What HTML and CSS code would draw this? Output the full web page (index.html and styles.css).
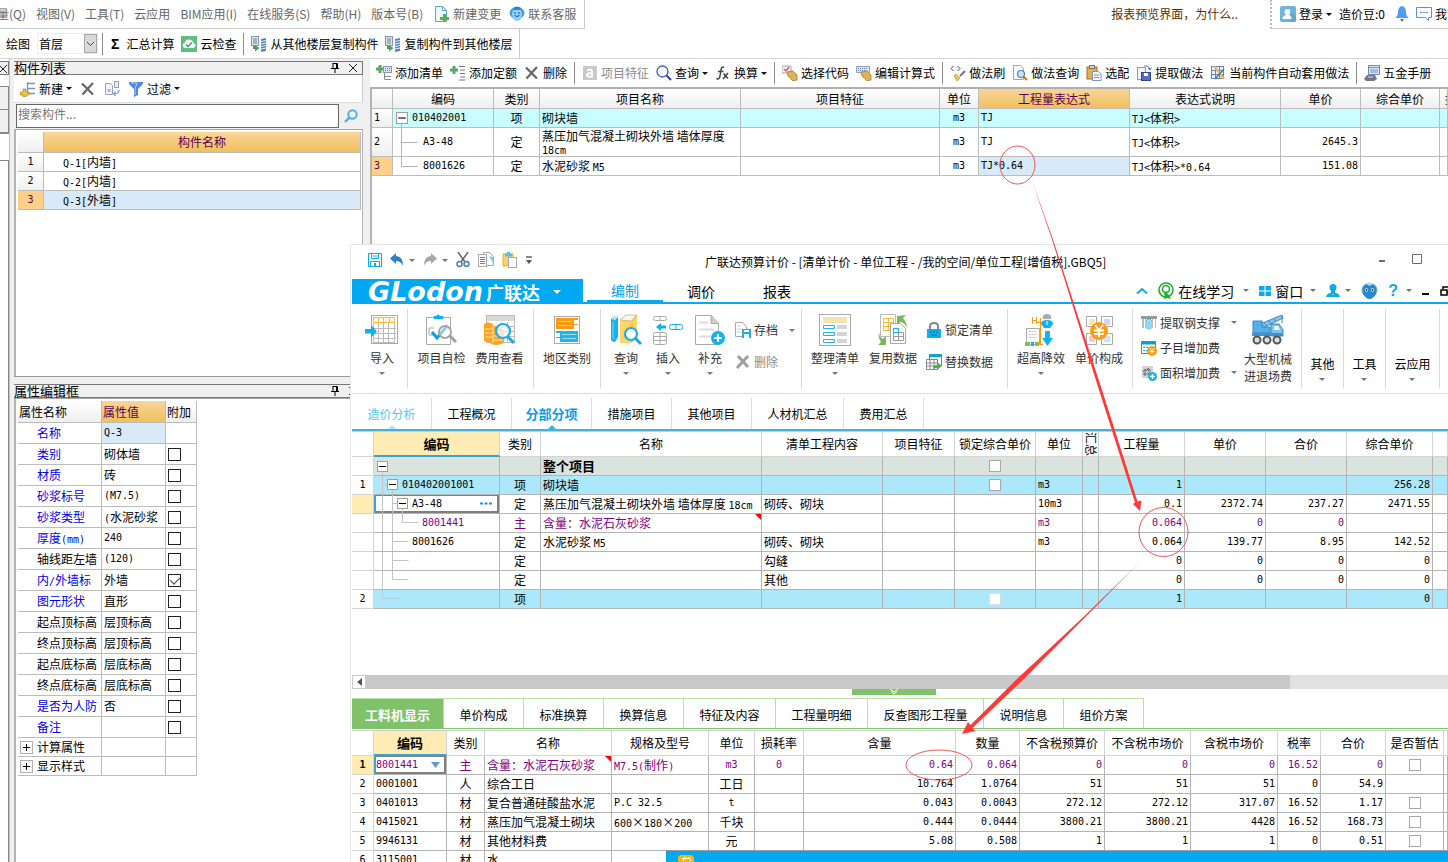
FILE: index.html
```html
<!DOCTYPE html>
<html lang="zh-CN">
<head>
<meta charset="utf-8">
<title>广联达预算计价</title>
<link rel="stylesheet" href="styles.css">
</head>
<body>
<svg class="defs" aria-hidden="true">
  <symbol id="i-cross" viewBox="0 0 16 16"><path d="M2 2.500l11 11M13 2L2.500 13.500" fill="none" stroke="#666" stroke-width="2.200"/></symbol>
  <symbol id="i-pin" viewBox="0 0 10 10"><path d="M2.500 .5h5M3 .5v5M6.500 .5v5M7.500 .5v5M1 5.500h8M5 6v4" fill="none" stroke="#000"/></symbol>
  <symbol id="i-close" viewBox="0 0 10 10"><path d="M1 1l8 8M9 1L1 9" fill="none" stroke="#222"/></symbol>
  <symbol id="i-copyfloor" viewBox="0 0 16 16"><rect x=".5" y=".5" width="7" height="9" fill="#dfe3ea" stroke="#8a94a6"/><path d="M2 3h4M2 5h4M2 7h4" stroke="#6b7fa8"/><path d="M10 3l5-1v13l-5 1z" fill="#5d84b8"/><path d="M10 5.500l5-1M10 8l5-1M10 10.500l5-1M10 13l5-1" stroke="#e4edf8"/><path d="M2 10v3h2v2.500l4.500-3.500L4 9v1z" fill="#3fa35c"/></symbol>
  <symbol id="i-minus" viewBox="0 0 11 11"><rect x=".5" y=".5" width="10" height="10" fill="#fff" stroke="#a0a0a0"/><path d="M2 5.500h7" stroke="#000"/></symbol>
  <symbol id="i-plus" viewBox="0 0 13 13"><rect x=".5" y=".5" width="12" height="12" fill="#fff" stroke="#b0b0b0"/><path d="M3 6.500h7M6.500 3v7" stroke="#000"/></symbol>
</svg>

<div class="app">
  <header class="top">
    <nav class="menu">
      <button>量(Q)</button><button>视图(V)</button><button>工具(T)</button><button>云应用</button><button>BIM应用(I)</button><button>在线服务(S)</button><button>帮助(H)</button><button>版本号(B)</button>
      <button><svg width="16" height="16" viewBox="0 0 16 16"><path d="M2.500 .5h7l4 4v11h-11z" fill="#eef7fd" stroke="#63a5c8"/><path d="M9.500 .5v4h4" fill="none" stroke="#63a5c8"/><path d="M10 8h3v3h3v3h-3v2h-3v-2H7v-3h3z" fill="#5cb335"/></svg>新建变更</button>
      <button><svg width="16" height="16" viewBox="0 0 16 16"><ellipse cx="8" cy="7" rx="7.500" ry="6" fill="#3f9be4"/><path d="M3 8q0-5 5-5t5 5l-1 5q-4 4-8 0z" fill="#8fd0fa"/><path d="M4 2q4-3 8 0l-1 2H5z" fill="#2d86d2"/><path d="M5 7h2M9 7h2M5.500 9.500q2.500 2 5 0" fill="none" stroke="#185a9a"/></svg>联系客服</button>
    </nav>
    <a class="news" href="#">报表预览界面，为什么..</a>
    <div class="account">
      <button><svg width="16" height="16" viewBox="0 0 16 16"><rect width="16" height="16" rx="2" fill="#6eb4dc"/><circle cx="7.500" cy="6" r="3" fill="#fff"/><path d="M2.500 13q0-4 5-4t5 4z" fill="#fff"/><path d="M10 5l6 6v5h-5z" fill="#5598bf" opacity=".5"/></svg>登录<i class="caret dark"></i></button>
      <span>造价豆:0</span>
      <svg width="14" height="16" viewBox="0 0 14 16"><path d="M7 0q4 1 4 6 0 4 3 6H0q3-2 3-6 0-5 4-6z" fill="#519cf5"/><path d="M5 13h4l-2 3z" fill="#4a6ea0"/></svg>
      <button><svg width="16" height="16" viewBox="0 0 16 16"><path d="M.5 1.500h15v10h-3v3l-3-3h-9z" fill="#fff" stroke="#4a93e8"/><path d="M4 6.500h2M7 6.500h2M10 6.500h2" stroke="#4a93e8"/></svg>我</button>
    </div>
  </header>

  <div class="floorbar">
    <div class="floorbar-in">
      <button>绘图</button>
      <span class="combo"><select aria-label="楼层"><option>首层</option></select><svg width="13" height="19" viewBox="0 0 13 19"><rect x=".5" y=".5" width="12" height="18" fill="#d9d9d9" stroke="#a8a8a8"/><path d="M3 8l3.500 3.500L10 8" fill="none" stroke="#444"/></svg></span>
      <i class="sep"></i>
      <button class="sum"><b>Σ</b>汇总计算</button>
      <button><svg width="16" height="16" viewBox="0 0 16 16"><rect width="16" height="16" fill="#62bd80"/><path d="M4 12q-3-1-2-3.500 0-2 2-2 1-3.500 4.500-3t4 3.500q2 .5 2 2.500T12 12z" fill="#f2fbf5"/><path d="M5 8.500l2 2 4-4" fill="none" stroke="#4a9c66" stroke-width="1.300"/></svg>云检查</button>
      <i class="sep"></i>
      <button><svg width="16" height="16"><use href="#i-copyfloor"/></svg>从其他楼层复制构件</button>
      <button><svg width="16" height="16"><use href="#i-copyfloor"/></svg>复制构件到其他楼层</button>
    </div>
  </div>

  <div class="work">
    <aside class="strip"><div class="strip-title"><svg width="8" height="10" viewBox="2 0 8 10"><use href="#i-close" width="10" height="10"/></svg></div><div class="strip-box"></div><div class="strip-box on"></div><div class="strip-rest"></div></aside>

    <aside class="side">
      <section class="pane list">
        <h2 class="pane-title">构件列表<span><svg width="10" height="10"><use href="#i-pin"/></svg><svg width="10" height="10"><use href="#i-close"/></svg></span></h2>
        <div class="pane-tools">
          <button><svg width="16" height="16" viewBox="0 0 16 16"><path d="M7.500 1v11M8 2.500h7M8 7.500h7M8 12.500h7" stroke="#7c93ba" fill="none" stroke-width="1.300"/><path d="M3 8h3v3h3v3H6v2H3v-2H0v-3h3z" fill="#e8c34e" stroke="#9a7a1c" stroke-width=".6"/></svg>新建<i class="caret dark"></i></button>
          <button aria-label="删除"><svg width="16" height="16"><use href="#i-cross"/></svg></button>
          <button aria-label="复制"><svg width="16" height="16" viewBox="0 0 16 16"><path d="M1.500 2.500h5l2 2v9h-7z" fill="#f3f5fa" stroke="#9aa3b8"/><path d="M3.500 8h3v3h-3z" fill="#aeb8d0"/><rect x="10.500" y=".5" width="4" height="6" fill="#e6ebf5" stroke="#9aa3b8"/><path d="M15 9q0 4-5 4m1.500-2.500L9.500 13l2 2" fill="none" stroke="#4a78d0"/></svg></button>
          <button><svg width="16" height="16" viewBox="0 0 16 16"><path d="M1 1h14v2L10 8v6l-4 2V8L1 3z" fill="#4f8ae0"/><path d="M3 2h6L7 8v6" fill="none" stroke="#b5d1fa"/></svg>过滤<i class="caret dark"></i></button>
        </div>
        <form class="search"><input type="text" aria-label="搜索构件" placeholder="搜索构件..."><button type="button" aria-label="搜索"><svg width="14" height="14" viewBox="0 0 14 14"><circle cx="8.500" cy="5.500" r="4.200" fill="#e4f4fe" stroke="#5aa9e0" stroke-width="2"/><path d="M5.500 8.500L1 13" stroke="#5aa9e0" stroke-width="2.400"/></svg></button></form>
        <div class="pane-body">
          <table class="grid parts">
            <colgroup><col class="w26"><col></colgroup>
            <tr class="head"><th></th><th class="gold">构件名称</th></tr>
            <tr><th class="n">1</th><td><span class="n">Q-1[</span>内墙<span class="n">]</span></td></tr>
            <tr><th class="n">2</th><td><span class="n">Q-2[</span>内墙<span class="n">]</span></td></tr>
            <tr><th class="n cur">3</th><td class="sel"><span class="n">Q-3[</span>外墙<span class="n">]</span></td></tr>
          </table>
        </div>
      </section>
      <section class="pane props">
        <h2 class="pane-title">属性编辑框<span><svg width="10" height="10"><use href="#i-pin"/></svg><svg width="10" height="10"><use href="#i-close"/></svg></span></h2>
        <div class="pane-body">
          <table class="grid prop">
            <colgroup><col class="w84"><col class="w64"><col class="w31"></colgroup>
            <tr class="head"><th>属性名称</th><th class="gold">属性值</th><th>附加</th></tr>
            <tr><td class="key">名称</td><td class="sel n">Q-3</td><td></td></tr>
            <tr><td class="key">类别</td><td>砌体墙</td><td><input type="checkbox" aria-label="类别"></td></tr>
            <tr><td class="key">材质</td><td>砖</td><td><input type="checkbox" aria-label="材质"></td></tr>
            <tr><td class="key">砂浆标号</td><td class="n">(M7.5)</td><td><input type="checkbox" aria-label="砂浆标号"></td></tr>
            <tr><td class="key">砂浆类型</td><td><span class="n">(</span>水泥砂浆</td><td><input type="checkbox" aria-label="砂浆类型"></td></tr>
            <tr><td class="key">厚度<span class="n">(mm)</span></td><td class="n">240</td><td><input type="checkbox" aria-label="厚度"></td></tr>
            <tr><td class="key blk">轴线距左墙</td><td class="n">(120)</td><td><input type="checkbox" aria-label="轴线距左墙"></td></tr>
            <tr><td class="key">内<span class="n">/</span>外墙标</td><td>外墙</td><td><input type="checkbox" checked aria-label="内外墙标"></td></tr>
            <tr><td class="key">图元形状</td><td>直形</td><td><input type="checkbox" aria-label="图元形状"></td></tr>
            <tr><td class="key blk">起点顶标高</td><td>层顶标高</td><td><input type="checkbox" aria-label="起点顶标高"></td></tr>
            <tr><td class="key blk">终点顶标高</td><td>层顶标高</td><td><input type="checkbox" aria-label="终点顶标高"></td></tr>
            <tr><td class="key blk">起点底标高</td><td>层底标高</td><td><input type="checkbox" aria-label="起点底标高"></td></tr>
            <tr><td class="key blk">终点底标高</td><td>层底标高</td><td><input type="checkbox" aria-label="终点底标高"></td></tr>
            <tr><td class="key">是否为人防</td><td>否</td><td><input type="checkbox" aria-label="是否为人防"></td></tr>
            <tr><td class="key">备注</td><td></td><td><input type="checkbox" aria-label="备注"></td></tr>
            <tr class="grp"><td><svg width="13" height="13"><use href="#i-plus"/></svg>计算属性</td><td></td><td></td></tr>
            <tr class="grp"><td><svg width="13" height="13"><use href="#i-plus"/></svg>显示样式</td><td></td><td></td></tr>
          </table>
        </div>
      </section>
    </aside>

    <main class="main">
      <div class="tools">
        <button><svg width="16" height="16" viewBox="0 0 16 16"><path d="M2.500 0h3v2.500H8v3H5.500V8h-3V5.500H0v-3h2.500z" fill="#5ea866"/><rect x="7.500" y="1.500" width="8" height="6" fill="#dbe4f5" stroke="#8795b0"/><path d="M9 3.500h5M9 5.500h5" stroke="#5c79b8" stroke-dasharray="1 1"/><path d="M8.500 8v6.500M9 11.500h6M9 14.500h6" stroke="#888" fill="none"/></svg>添加清单</button>
        <button><svg width="16" height="16" viewBox="0 0 16 16"><path d="M2.500 1h3v2.500H8v3H5.500V9h-3V6.500H0v-3h2.500z" fill="#5ea866"/><path d="M9 1.500h6M10 5h5M10 8.500h5M10 12h5M9 15h6" stroke="#777"/></svg>添加定额</button>
        <button><svg width="16" height="16"><use href="#i-cross"/></svg>删除</button>
        <i class="sep"></i>
        <button class="off"><svg width="16" height="16" viewBox="0 0 16 16"><rect x="1" y="1" width="14" height="14" fill="#c9c9c9"/><path d="M5 5.500q5-2 5 1v5q-5 1-5-1.200T10 8" fill="none" stroke="#fff" stroke-width="1.800"/></svg>项目特征</button>
        <button><svg width="16" height="16" viewBox="0 0 16 16"><circle cx="6.500" cy="6.500" r="5.500" fill="#f4f8ff" stroke="#4858b8" stroke-width="1.300"/><path d="M10.500 10.500l4.500 4.500" stroke="#30409a" stroke-width="2"/></svg>查询<i class="caret dark"></i></button>
        <button><svg width="16" height="16" viewBox="0 0 16 16"><path d="M9 2.500Q6.500 1 6 5L5 11q-.7 4-3.500 2.500M3 6.500h5.500M8.500 8.500l4.500 5M13 8l-5 6" fill="none" stroke="#444" stroke-width="1.500"/></svg>换算<i class="caret dark"></i></button>
        <i class="sep"></i>
        <button><svg width="16" height="16" viewBox="0 0 16 16"><path d="M0 1h9v7H0z" fill="#f0f2f6" stroke="#aab"/><path d="M2 4l2 2 3-4" fill="none" stroke="#e2574c" stroke-width="1.400"/><path d="M5 7l6-1 4 4v5l-4 1-5-5z" fill="#dfb257" stroke="#9b7427" stroke-width=".7"/></svg>选择代码</button>
        <button><svg width="16" height="16" viewBox="0 0 16 16"><path d="M.5 1.500h13v6H.5z" fill="#dce4f2" stroke="#93a0bb"/><path d="M2 3.500h10M2 5.500h10" stroke="#6d83b0" stroke-dasharray="1 1"/><path d="M5 7l6-1 4 4v5l-4 1-5-5z" fill="#dfb257" stroke="#9b7427" stroke-width=".7"/></svg>编辑计算式</button>
        <i class="sep"></i>
        <button><svg width="16" height="16" viewBox="0 0 16 16"><path d="M3.500 1L1 3.500 3.500 6M7.500 1L10 3.500 7.500 6" fill="none" stroke="#444"/><path d="M15 6l-5 5" stroke="#7a6a9a" stroke-width="2"/><path d="M6 9l4 4-3 3-3-5z" fill="#ecc55e" stroke="#a5832c" stroke-width=".6"/></svg>做法刷</button>
        <button><svg width="16" height="16" viewBox="0 0 16 16"><path d="M1.500 .5h7l3 3v11h-10z" fill="#fafbfd" stroke="#9aa5b5"/><circle cx="9" cy="9" r="3.500" fill="#c5e2f7" stroke="#5c7fa8" stroke-width="1.200"/><path d="M11.500 11.500L15 15" stroke="#b87f2a" stroke-width="2.200"/></svg>做法查询</button>
        <button><svg width="16" height="16" viewBox="0 0 16 16"><rect x="1" y="2" width="10" height="12" fill="#e5b04a" stroke="#a07323"/><rect x="3.500" y=".5" width="5" height="3" fill="#c9ced8" stroke="#777"/><path d="M6.500 6.500h6l2.500 2.500v6.500H6.500z" fill="#f4f7fd" stroke="#7d93c0"/><path d="M8 10h5M8 12.500h5" stroke="#6d8fd0"/></svg>选配</button>
        <button><svg width="16" height="16" viewBox="0 0 16 16"><path d="M1.500 2.500h8v12h-8z" fill="#f2f4fa" stroke="#8998b5"/><path d="M8 1q5-1 6 4m-2-2l2 2 1.500-2.500" fill="none" stroke="#4878c8"/><rect x="5.500" y="7.500" width="9" height="8" fill="#5270c0" stroke="#32458c"/><rect x="8" y="8" width="4" height="3" fill="#fff"/></svg>提取做法</button>
        <button><svg width="16" height="16" viewBox="0 0 16 16"><rect x="1.500" y="1.500" width="12" height="12" fill="#eaf0fa" stroke="#6784b5"/><path d="M1 5.500h13M1 9.500h13M5.500 1v13M9.500 1v13" stroke="#6784b5"/><path d="M4 1l10 13" stroke="#e2ba56" stroke-width="2.200"/><path d="M14 4L5 14" stroke="#5273b0" stroke-width="1.500"/></svg>当前构件自动套用做法</button>
        <i class="sep"></i>
        <button><svg width="16" height="16" viewBox="0 0 16 16"><path d="M4.500 .5h11v9h-11z" fill="#dce7f7" stroke="#6c87b5"/><path d="M5 2.500h10M6 5h8M6 7h8" stroke="#6c8fce"/><path d="M0 14l3-4h8l2 4-3 2H2z" fill="#727985"/><path d="M4 12h5" stroke="#dde"/></svg>五金手册</button>
      </div>
      <div class="main-body">
        <table class="grid quota">
          <colgroup><col class="w21"><col class="w101"><col class="w46"><col class="w201"><col class="w199"><col class="w39"><col class="w151"><col class="w151"><col class="w80"><col class="w79"><col></colgroup>
          <tr class="head"><th></th><th>编码</th><th>类别</th><th>项目名称</th><th>项目特征</th><th>单位</th><th class="gold">工程量表达式</th><th>表达式说明</th><th>单价</th><th>综合单价</th><th class="cut">措</th></tr>
          <tr class="cyan"><th class="n l">1</th><td class="n tree"><svg width="19" height="18" viewBox="0 0 19 18"><path d="M8.500 14v4" stroke="#b5b5b5"/><use href="#i-minus" x="3" y="3" width="12" height="12"/></svg>010402001</td><td class="c">项</td><td>砌块墙</td><td></td><td class="c n">m3</td><td class="n">TJ</td><td><span class="n">TJ&lt;</span>体积<span class="n">&gt;</span></td><td></td><td></td><td></td></tr>
          <tr class="tall"><th class="n l">2</th><td class="n tree"><svg width="30" height="28" viewBox="0 0 30 28"><path d="M8.500 0v28M8.500 14.500h16" fill="none" stroke="#b5b5b5"/></svg>A3-48</td><td class="c">定</td><td class="wrap">蒸压加气混凝土砌块外墙 墙体厚度 <span class="n">18cm</span></td><td></td><td class="c n">m3</td><td class="n">TJ</td><td><span class="n">TJ&lt;</span>体积<span class="n">&gt;</span></td><td class="r n">2645.3</td><td></td><td></td></tr>
          <tr><th class="n l cur">3</th><td class="n tree"><svg width="30" height="18" viewBox="0 0 30 18"><path d="M8.500 0v9.500h16" fill="none" stroke="#b5b5b5"/></svg>8001626</td><td class="c">定</td><td>水泥砂浆 <span class="n">M5</span></td><td></td><td class="c n">m3</td><td class="n sel">TJ*0.64</td><td><span class="n">TJ&lt;</span>体积<span class="n">&gt;*0.64</span></td><td class="r n">151.08</td><td></td><td></td></tr>
        </table>
      </div>
    </main>
  </div>
</div>

<section class="win">
  <header class="titlebar">
    <div class="quick">
      <button aria-label="保存"><svg width="14" height="14" viewBox="0 0 14 14"><path d="M.5 .5h13v13H.5z" fill="#fff" stroke="#0cabe8"/><path d="M3.500 1v4.500h7V1M2.500 13V8.500h9V13M5 3h4" fill="none" stroke="#0cabe8"/><path d="M6 10h2v4H6z" fill="#0cabe8"/></svg></button>
      <button aria-label="撤销"><svg width="14" height="14" viewBox="0 0 14 14"><path d="M6 0v3q7 0 7 10-2-5-7-5v3L0 5.500z" fill="#2a83c8"/></svg><i class="caret"></i></button>
      <button aria-label="重做"><svg width="14" height="14" viewBox="0 0 14 14"><path d="M8 0v3q-7 0-7 10 2-5 7-5v3l6-5.500z" fill="#a9a9a9"/></svg><i class="caret"></i></button>
      <button aria-label="剪切"><svg width="14" height="16" viewBox="0 0 14 16"><path d="M2 0l7 10M12 0L5 10" stroke="#666" stroke-width="1.500"/><circle cx="3.500" cy="12" r="2.500" fill="none" stroke="#4d7fb5" stroke-width="1.500"/><circle cx="10.500" cy="12" r="2.500" fill="none" stroke="#4d7fb5" stroke-width="1.500"/></svg></button>
      <button aria-label="复制"><svg width="16" height="16" viewBox="0 0 16 16"><path d="M5.500 .5h6l4 4v9h-10z" fill="#fff" stroke="#aaa"/><path d="M11 4l4 7V5z" fill="#74cdf2"/><rect x=".5" y="2.500" width="8" height="12" fill="#fff" stroke="#aaa"/><path d="M2 5.500h5M2 7.500h5M2 9.500h5M2 11.500h5" stroke="#0cabe8"/></svg></button>
      <button aria-label="粘贴"><svg width="16" height="16" viewBox="0 0 16 16"><rect x="1" y="2" width="10" height="12" fill="#fdd268" stroke="#e8ae30"/><path d="M3 1.500h2V0h3v1.500h2v3H3z" fill="#4cc0ee"/><rect x="6.500" y="5.500" width="8" height="10" fill="#fff" stroke="#aaa"/></svg></button>
      <button aria-label="更多"><svg width="6" height="8" viewBox="0 0 6 8"><path d="M0 1h6" stroke="#555" stroke-width="1.400"/><path d="M0 4h6L3 8z" fill="#555"/></svg></button>
    </div>
    <h1>广联达预算计价 - [清单计价 - 单位工程 - /我的空间/单位工程[增值税].GBQ5]</h1>
    <div class="winctl">
      <button aria-label="最小化"><svg width="8" height="10" viewBox="0 0 8 10"><path d="M1 7h6" stroke="#6a6a78" stroke-width="2"/></svg></button>
      <button aria-label="最大化"><svg width="10" height="10" viewBox="0 0 10 10"><path d="M.5 .5h9v9h-9z" fill="none" stroke="#6a6a78"/></svg></button>
    </div>
  </header>

  <nav class="ribbon-tabs">
    <button class="logo"><em>GLodon</em><b>广联达</b><i class="caret"></i></button>
    <button class="rtab on">编制</button><button class="rtab">调价</button><button class="rtab">报表</button>
    <div class="ribbon-right">
      <button aria-label="收起"><svg width="12" height="8" viewBox="0 0 12 8"><path d="M1 6.500L6 2l5 4.500" fill="none" stroke="#0cabe8" stroke-width="2"/></svg></button>
      <button class="learn"><svg width="16" height="18" viewBox="0 0 16 18"><circle cx="8" cy="8" r="7" fill="none" stroke="#1fae2e" stroke-width="1.600"/><circle cx="8" cy="7" r="3.500" fill="none" stroke="#1fae2e" stroke-width="1.600"/><path d="M5 10.500q5 0 6 3l2 3.500-3.500-1-4 1q2-3 .5-6" fill="#1fae2e"/></svg>在线学习<i class="caret"></i></button>
      <button class="wnd"><svg width="12" height="12" viewBox="0 0 12 12"><path d="M0 1h5.500v4.500H0zM6.500 1H12v4.500H6.500zM0 6.500h5.500V11H0zM6.500 6.500H12V11H6.500z" fill="#0cabe8"/></svg>窗口<i class="caret"></i></button>
      <button aria-label="用户"><svg width="14" height="14" viewBox="0 0 14 14"><circle cx="7" cy="3.500" r="3.500" fill="#0cabe8"/><path d="M0 13q1-4 5-4l2 2 2-2q4 0 5 4z" fill="#0cabe8"/><path d="M5 6h4v4H5z" fill="#0cabe8"/></svg><i class="caret"></i></button>
      <button aria-label="助手"><svg width="17" height="17" viewBox="0 0 17 17"><ellipse cx="8.500" cy="8" rx="8" ry="7" fill="#5ba7dd"/><path d="M2 6q6-9 13 0v6q-3 5-6.500 5T2 12z" fill="#2886cf"/><path d="M5 2l3.500 2L12 2 8.500 0z" fill="#bcd9ee"/><circle cx="5.500" cy="8" r="1.700" fill="#fff"/><circle cx="11.500" cy="8" r="1.700" fill="#fff"/><circle cx="5.500" cy="8" r="1" fill="#222"/><circle cx="11.500" cy="8" r="1" fill="#222"/></svg></button>
      <button class="help"><b>?</b><i class="caret"></i></button>
      <button aria-label="最小化子窗口"><svg width="8" height="10" viewBox="0 0 8 10"><path d="M0 8h7" stroke="#000" stroke-width="2"/></svg></button>
      <button aria-label="还原子窗口"><svg width="10" height="10" viewBox="0 0 10 10"><path d="M1 4h6v5H1zM3 3V1h6v5H7" fill="none" stroke="#000" stroke-width="1.500"/></svg></button>
    </div>
  </nav>

  <div class="ribbon">
    <div class="g w55">
      <button class="big"><svg width="34" height="32" viewBox="0 0 34 32"><rect x="6.500" y="1.500" width="26" height="28" fill="#fff" stroke="#aaa"/><path d="M8.500 9v19M13.500 9v19M18.500 9v19M23.500 9v19M29.500 9v19M8 14.500h23M8 19.500h23M8 24.500h23M8 28.500h22" stroke="#bbb" fill="none"/><path d="M8.500 3.500h21v5h-21zM13.500 3v6M18.500 3v6M24.500 3v6" stroke="#fdb93a" fill="#fff6df"/><path d="M0 15h6v-4l6 6.500-6 6v-4H0z" fill="#0cb1ec"/></svg><span>导入</span><i class="caret"></i></button>
    </div>
    <div class="g w126 ctr">
      <button class="big"><svg width="32" height="32" viewBox="0 0 32 32"><path d="M1.500 3.500h24v27h-24z" fill="#fff" stroke="#aaa"/><path d="M9 5V2h2q2-3 4 0h3v3z" fill="#0cb1ec"/><path d="M9 14H4v7h4" fill="none" stroke="#aaa"/><path d="M7 18l5 6L22 12" fill="none" stroke="#0c9fe0" stroke-width="3"/><circle cx="20" cy="18" r="6" fill="#fff" fill-opacity=".5" stroke="#a5a5a5" stroke-width="2"/><path d="M25 22l6 6" stroke="#a0a0a0" stroke-width="3"/></svg><span>项目自检</span></button>
      <button class="big"><svg width="32" height="32" viewBox="0 0 32 32"><rect x="2.500" y="1.500" width="28" height="27" fill="#fff" stroke="#bbb"/><path d="M3 2h27v5H3z" fill="#d8d8d8"/><path d="M3 12.500h27M3 17.500h27M3 22.500h27M17.500 8v20M23.500 8v20" stroke="#bbb"/><path d="M0 10l4-2 5 2v2l6 1 5 3v13q-9 4-14 0l-6-2z" fill="#fea41c"/><path d="M1 15h8M1 19h8M1 23h8M10 18h9M10 22h9M10 26h9M9 12v17" stroke="#fff" opacity=".7"/><circle cx="19" cy="17" r="7" fill="#fff" fill-opacity=".7" stroke="#18b0ec" stroke-width="2.200"/><path d="M24 23l6 6" stroke="#18a8e6" stroke-width="3"/></svg><span>费用查看</span></button>
    </div>
    <div class="g w67 ctr">
      <button class="big"><svg width="28" height="32" viewBox="0 0 28 32"><rect x="1.500" y="2.500" width="25" height="27" fill="#fff" stroke="#aaa"/><path d="M3 4h22v11H3z" fill="#fb9a10"/><path d="M3 17h22v11H3z" fill="#22b4e6"/><path d="M21 6h4v4h-4zM21 11h4v4h-4zM3 19h4v4H3zM3 24h4v4H3z" fill="#fff"/><path d="M5 7.500h14M5 11.500h14M9 20.500h14M9 24.500h14" stroke="#fff" opacity=".55"/></svg><span>地区类别</span></button>
    </div>
    <div class="g w201 pl4">
      <button class="big w42"><svg width="32" height="32" viewBox="0 0 32 32"><path d="M1 5q3-4 7-4v22l-3 5q-4 0-4-3z" fill="#12b2ec"/><path d="M2 5l5-4M4 6l5-5" stroke="#fff" stroke-width="1.200"/><path d="M3 8v17" stroke="#7fd6f7"/><path d="M10 7l5-6h12v22l-5 6H10z" fill="#ffd566"/><path d="M10 6l6-5h10l-4 6z" fill="#f7f7f7" stroke="#c8a860" stroke-width=".7"/><path d="M22 7v21M27 1l-5 6" stroke="#f2b634"/><circle cx="21" cy="20" r="6" fill="#fff" stroke="#18b0ec" stroke-width="2.200"/><path d="M25 24l6 6" stroke="#18a8e6" stroke-width="3"/></svg><span>查询</span><i class="caret"></i></button>
      <button class="big w42"><svg width="32" height="32" viewBox="0 0 32 32"><rect x="1.500" y="2.500" width="13" height="4" rx="2" fill="#fff" stroke="#aaa"/><path d="M8 2.500v4" stroke="#aaa"/><path d="M4 13l5-4v2.500h5v3H9V17z" fill="#0cb1ec"/><rect x="17.500" y="10.500" width="13" height="5" rx="2" fill="#fff" stroke="#0cb1ec"/><path d="M24 10.500v5" stroke="#0cb1ec"/><rect x="1.500" y="18.500" width="13" height="12" rx="2" fill="#fff" stroke="#aaa"/><path d="M8 18.500v12M1.500 22.500h13M1.500 26.500h13" stroke="#aaa"/></svg><span>插入</span><i class="caret"></i></button>
      <button class="big w42"><svg width="32" height="32" viewBox="0 0 32 32"><path d="M1.500 1.500h16l7 8v21h-23z" fill="#fff" stroke="#aaa"/><path d="M17 1.500v8h8" fill="#ccc" stroke="#aaa"/><path d="M5 8.500h9M5 15.500h15M5 22.500h12" stroke="#ddd" stroke-width="2"/><circle cx="24" cy="24" r="7" fill="#12b2ec"/><path d="M20 24h8M24 20v8" stroke="#fff" stroke-width="2"/></svg><span>补充</span><i class="caret"></i></button>
      <div class="stack">
        <button><svg width="16" height="16" viewBox="0 0 16 16"><path d="M.5 .5h7l4 4v10H.5z" fill="#fff" stroke="#aaa"/><path d="M2 4h4M2 7h6M2 10h4" stroke="#ccc"/><path d="M7 7h9v9H7z" fill="#21aede"/><path d="M9 8h5v2H9zM9 12h5v4H9z" fill="#fff"/></svg>存档<i class="caret"></i></button>
        <button class="off"><svg width="16" height="14" viewBox="0 0 16 14"><path d="M3 1l10 11M13 1L2 13" stroke="#a0a0a0" stroke-width="3"/></svg>删除</button>
      </div>
    </div>
    <div class="g w206 pl4">
      <button class="big w58"><svg width="32" height="32" viewBox="0 0 32 32"><rect x=".5" y=".5" width="31" height="31" fill="#fff" stroke="#aaa"/><path d="M4 3h24v6H4z" fill="#f5e3b0"/><path d="M4.500 11.500h11v3h-11zM4.500 18.500h11v3h-11zM4.500 25.500h11v3h-11z" fill="#fff" stroke="#25b2e8"/><path d="M18 11h10v4H18zM18 18h10v4H18zM18 25h10v4H18z" fill="#d5d5d5"/></svg><span>整理清单</span><i class="caret"></i></button>
      <button class="big w58"><svg width="32" height="32" viewBox="0 0 32 32"><path d="M3.500 .5h15v22h-15z" fill="#fff" stroke="#bbb"/><path d="M6.500 4.500h10v12h-10zM6.500 8.500h10M6.500 12.500h10M11.500 4v12" fill="none" stroke="#fdb93a"/><path d="M13.500 9.500h10l5 5v15h-15z" fill="#fff" stroke="#aaa"/><path d="M16.500 14.500h5v4h5v8h-10zM16.500 18.500h6M16.500 22.500h10M21.500 16v10" fill="none" stroke="#999"/><path d="M16.500 14.500h5v4h-5z" fill="#fff" stroke="#12b2ec"/><path d="M20 2l9-1-3 3q4 5 4 10-2-5-6-6l-4 2z" fill="#78b95c"/><path d="M2 18q0 5 4 7l3-3v9H1l3-3q-3-4-2-10z" fill="#78b95c"/></svg><span>复用数据</span></button>
      <div class="stack">
        <button><svg width="16" height="16" viewBox="0 0 16 16"><path d="M4 7V4q0-3 4-3t4 3v3" fill="none" stroke="#888" stroke-width="2"/><path d="M1 7h14v9H1z" fill="#0caeee"/><path d="M4 10h2M7 10h2M10 10h2M5 13h6" stroke="#056a9c"/></svg>锁定清单</button>
        <button><svg width="16" height="16" viewBox="0 0 16 16"><path d="M3.500 .5h12v11h-12z" fill="#fff" stroke="#0ca6c8"/><path d="M3 2h12" stroke="#0ca6c8" stroke-width="2"/><path d="M.5 5.500h11v10H.5z" fill="#fff" stroke="#888"/><path d="M0 9h12M0 12h12M4 6v10M8 6v10" stroke="#888"/><path d="M7 15q0-4 4-4V8l5 4-5 4v-2q-2 0-4 1z" fill="#44b34c"/></svg>替换数据</button>
      </div>
    </div>
    <div class="g w125 pl4">
      <button class="big w58"><svg width="32" height="32" viewBox="0 0 32 32"><path d="M1.500 14.500h13v16h-13z" fill="#fff" stroke="#aaa"/><path d="M4 17.500h8M4 20.500h8M4 23.500h8" stroke="#bbb" stroke-dasharray="1.500 1"/><path d="M0 28h5v4H0zM10 28h4v4h-4z" fill="#7cc063"/><path d="M6 28h3v4H6z" fill="#12b2ec"/><path d="M7.500 3v7M11.500 3v7M7.500 6.500h4M15.500 4v27M12 8.500h6M12 30.500h6" stroke="#fb9a10" fill="none"/><path d="M18 3q0-3 4-3t4 3v2h-8z" fill="#aaa"/><path d="M16 10q0-4 6-4t6 4l-3 4h-6z" fill="#12b2ec"/><path d="M22 7v4" stroke="#fff"/><path d="M20 17h5v7h3l-5.500 8L17 24h3z" fill="#12b2ec"/></svg><span>超高降效</span><i class="caret"></i></button>
      <button class="big w58"><svg width="32" height="32" viewBox="0 0 32 32"><path d="M3.500 2.500h10v10h-10zM18.500 2.500h11v10h-11zM3.500 19.500h10v11h-10zM18.500 19.500h11v11h-11z" fill="#fff" stroke="#aaa"/><path d="M6 5h6v6H6z" fill="#fae4b8"/><path d="M21 5h6v6h-6z" fill="#cfd5e8"/><path d="M6 22h6v6H6z" fill="#f4cbc4"/><path d="M21 22h6v6h-6z" fill="#bfe6f5"/><circle cx="16" cy="17" r="9" fill="#fb9d14"/><path d="M12 11l4 5 4-5M11 16.500h10M11 20h10M16 16v7" fill="none" stroke="#fff" stroke-width="1.800"/></svg><span>单价构成</span></button>
    </div>
    <div class="g w169 pl8">
      <div class="stack dense">
        <button><svg width="16" height="16" viewBox="0 0 16 16"><path d="M0 1h16v3H0z" fill="#999"/><path d="M1 4h2v9H1zM4 4h1v9H4zM11 4h1v9h-1zM14 4h1v9h-1z" fill="#bbb"/><path d="M5 6l3-3 3 3M8 4v11M6 6v8M10 6v8" stroke="#25aee6" fill="none"/></svg>提取钢支撑<i class="caret"></i></button>
        <button><svg width="16" height="16" viewBox="0 0 16 16"><path d="M.5 1.500h14v12H.5z" fill="#fff" stroke="#0c9fd0"/><path d="M1 3h13" stroke="#0c9fd0" stroke-width="3"/><path d="M2 7.500h5M2 10.500h5" stroke="#0cb1ec" stroke-dasharray="2 1"/><circle cx="11" cy="11" r="5" fill="#fb9d14"/><path d="M9 8l2 3 2-3M8.500 11.500h5M11 11v3" stroke="#fff" fill="none"/></svg>子目增加费</button>
        <button><svg width="16" height="16" viewBox="0 0 16 16"><path d="M1 1h11v12H1z" fill="#d4d4d4"/><path d="M2 7l2-3 2 2 1-3 3 3M2 9h8M4 5v6M8 4v7" stroke="#666" fill="none"/><circle cx="11.500" cy="11.500" r="4.500" fill="#12b2ec"/><path d="M9 11.500h5M11.500 9v5" stroke="#fff" stroke-width="1.400"/></svg>面积增加费<i class="caret"></i></button>
      </div>
      <button class="big crane"><svg width="32" height="32" viewBox="0 0 32 32"><path d="M8 10L30 1l1 3-18 9z" fill="#7cc4f2" stroke="#3d8cc0"/><path d="M30 3v6M12 9l3 3M17 7l2 3M22 5l2 3" stroke="#3d8cc0"/><path d="M1 7h9v6h8v6H1z" fill="#55b0ee" stroke="#3187bd"/><path d="M19 10h8l4 6v6H19z" fill="#7cc4f2" stroke="#3187bd"/><path d="M22 12h4l2 4h-6z" fill="#f0faff"/><path d="M0 19h31v3H0z" fill="#4a90c4"/><g fill="#ddd" stroke="#555" stroke-width="2"><circle cx="5" cy="26" r="3.500"/><circle cx="15" cy="26" r="3.500"/><circle cx="25" cy="26" r="3.500"/></g></svg><span>大型机械<br>进退场费</span></button>
    </div>
    <div class="g w42 menu3"><button class="big">其他<i class="caret"></i></button></div>
    <div class="g w42 menu3"><button class="big">工具<i class="caret"></i></button></div>
    <div class="g w54 menu3"><button class="big">云应用<i class="caret"></i></button></div>
  </div>

  <nav class="subtabs">
    <button class="pale">造价分析</button><button>工程概况</button><button class="on">分部分项</button><button>措施项目</button><button>其他项目</button><button class="wide">人材机汇总</button><button>费用汇总</button>
  </nav>

  <div class="upper">
    <table class="grid bill">
      <colgroup><col class="w22"><col class="w126"><col class="w41"><col class="w221"><col class="w121"><col class="w72"><col class="w81"><col class="w47"><col class="w16"><col class="w86"><col class="w81"><col class="w81"><col class="w86"><col></colgroup>
      <tr class="head"><th></th><th class="pick">编码</th><th>类别</th><th>名称</th><th>清单工程内容</th><th>项目特征</th><th>锁定综合单价</th><th>单位</th><th><span class="turn">汇总</span></th><th>工程量</th><th>单价</th><th>合价</th><th>综合单价</th><th></th></tr>
      <tr class="gray"><th></th><td class="tree"><svg width="28" height="18" viewBox="0 0 28 18"><path d="M8.500 14v4" stroke="#c4c4c4"/><use href="#i-minus" x="3" y="4" width="11" height="11"/></svg></td><td></td><td class="strong">整个项目</td><td></td><td></td><td class="c"><input type="checkbox" aria-label="锁定整个项目"></td><td></td><td></td><td></td><td></td><td></td><td></td><td></td></tr>
      <tr class="blue"><th class="n">1</th><td class="n tree"><svg width="28" height="18" viewBox="0 0 28 18"><path d="M8.500 0v18M18.500 14v4M8 8.500h5" stroke="#c4c4c4"/><use href="#i-minus" x="13" y="3" width="11" height="11"/></svg>010402001001</td><td class="c">项</td><td>砌块墙</td><td></td><td></td><td class="c"><input type="checkbox" aria-label="锁定砌块墙"></td><td class="n">m3</td><td></td><td class="r n">1</td><td></td><td></td><td class="r n">256.28</td><td></td></tr>
      <tr><th class="mark"></th><td class="n tree focus"><svg width="38" height="18" viewBox="0 0 38 18"><path d="M8.500 0v18M18.500 0v18M18 8.500h5M28.500 14v4" stroke="#c4c4c4"/><use href="#i-minus" x="23" y="3" width="11" height="11"/></svg>A3-48<button class="dots" aria-label="浏览"><svg width="12" height="3" viewBox="0 0 12 3"><path d="M0 .5h3v2H0zM4.500 .5h3v2h-3zM9 .5h3v2H9z" fill="#2f8ccc"/></svg></button></td><td class="c">定</td><td>蒸压加气混凝土砌块外墙 墙体厚度 <span class="n">18cm</span></td><td>砌砖、砌块</td><td></td><td></td><td class="n">10m3</td><td></td><td class="r n">0.1</td><td class="r n">2372.74</td><td class="r n">237.27</td><td class="r n">2471.55</td><td></td></tr>
      <tr class="violet"><th></th><td class="n tree"><svg width="48" height="18" viewBox="0 0 48 18"><path d="M8.500 0v18M18.500 0v18M28.500 0v8.500h16" fill="none" stroke="#c4c4c4"/></svg>8001441</td><td class="c">主</td><td class="note">含量：水泥石灰砂浆</td><td></td><td></td><td></td><td class="n">m3</td><td></td><td class="r n">0.064</td><td class="r n">0</td><td class="r n">0</td><td></td><td></td></tr>
      <tr><th></th><td class="n tree"><svg width="38" height="18" viewBox="0 0 38 18"><path d="M8.500 0v18M18.500 0v18M18.500 8.500h16" fill="none" stroke="#c4c4c4"/></svg>8001626</td><td class="c">定</td><td>水泥砂浆 <span class="n">M5</span></td><td>砌砖、砌块</td><td></td><td></td><td class="n">m3</td><td></td><td class="r n">0.064</td><td class="r n">139.77</td><td class="r n">8.95</td><td class="r n">142.52</td><td></td></tr>
      <tr><th></th><td class="n tree"><svg width="38" height="18" viewBox="0 0 38 18"><path d="M8.500 0v18M18.500 0v18M18.500 8.500h16" fill="none" stroke="#c4c4c4"/></svg></td><td class="c">定</td><td></td><td>勾缝</td><td></td><td></td><td></td><td></td><td class="r n">0</td><td class="r n">0</td><td class="r n">0</td><td class="r n">0</td><td></td></tr>
      <tr><th></th><td class="n tree"><svg width="38" height="18" viewBox="0 0 38 18"><path d="M8.500 0v18M18.500 0v8.500h16" fill="none" stroke="#c4c4c4"/></svg></td><td class="c">定</td><td></td><td>其他</td><td></td><td></td><td></td><td></td><td class="r n">0</td><td class="r n">0</td><td class="r n">0</td><td class="r n">0</td><td></td></tr>
      <tr class="blue"><th class="n">2</th><td class="n tree"><svg width="38" height="18" viewBox="0 0 38 18"><path d="M8.500 0v8.500h17" fill="none" stroke="#b4cdd6"/></svg></td><td class="c">项</td><td></td><td></td><td></td><td class="c"><input type="checkbox" disabled aria-label="锁定第二项"></td><td></td><td></td><td class="r n">1</td><td></td><td></td><td class="r n">0</td><td></td></tr>
    </table>
  </div>

  <div class="lower">
    <div class="scroll"><button aria-label="向左滚动"><svg width="5" height="8" viewBox="0 0 5 8"><path d="M5 0v8L0 4z" fill="#555"/></svg></button><div class="thumb"></div></div>
    <div class="handle"><svg width="10" height="6" viewBox="0 0 10 6"><path d="M1 0l4 3 4-3M2 2.500L5 5l3-2.500" fill="none" stroke="#fff"/></svg></div>
    <nav class="dtabs"><button class="on w92">工料机显示</button><button class="w80">单价构成</button><button class="w80">标准换算</button><button class="w80">换算信息</button><button class="w92">特征及内容</button><button class="w92">工程量明细</button><button class="w116">反查图形工程量</button><button class="w80">说明信息</button><button class="w80">组价方案</button></nav>
    <table class="grid detail">
      <colgroup><col class="w22"><col class="w73"><col class="w38"><col class="w127"><col class="w97"><col class="w46"><col class="w49"><col class="w152"><col class="w64"><col class="w85"><col class="w86"><col class="w87"><col class="w43"><col class="w65"><col class="w58"><col></colgroup>
      <tr class="head"><th></th><th class="pick">编码</th><th>类别</th><th>名称</th><th>规格及型号</th><th>单位</th><th>损耗率</th><th>含量</th><th>数量</th><th>不含税预算价</th><th>不含税市场价</th><th>含税市场价</th><th>税率</th><th>合价</th><th>是否暂估</th><th class="cut">锁</th></tr>
      <tr class="violet"><th class="n mark strong">1</th><td class="n focus">8001441<button class="drop" aria-label="选择"><svg width="9" height="6" viewBox="0 0 9 6"><path d="M0 0h9L4.500 6z" fill="#5b9bcf"/></svg></button></td><td class="c">主</td><td class="note">含量：水泥石灰砂浆</td><td><span class="n">M7.5(</span>制作<span class="n">)</span></td><td class="c n">m3</td><td class="c n">0</td><td class="r n">0.64</td><td class="r n">0.064</td><td class="r n">0</td><td class="r n">0</td><td class="r n">0</td><td class="r n">16.52</td><td class="r n">0</td><td class="c"><input type="checkbox" aria-label="暂估 8001441"></td><td></td></tr>
      <tr><th class="n">2</th><td class="n">0001001</td><td class="c">人</td><td>综合工日</td><td></td><td class="c">工日</td><td></td><td class="r n">10.764</td><td class="r n">1.0764</td><td class="r n">51</td><td class="r n">51</td><td class="r n">51</td><td class="r n">0</td><td class="r n">54.9</td><td></td><td></td></tr>
      <tr><th class="n">3</th><td class="n">0401013</td><td class="c">材</td><td>复合普通硅酸盐水泥</td><td class="n">P.C 32.5</td><td class="c n">t</td><td></td><td class="r n">0.043</td><td class="r n">0.0043</td><td class="r n">272.12</td><td class="r n">272.12</td><td class="r n">317.07</td><td class="r n">16.52</td><td class="r n">1.17</td><td class="c"><input type="checkbox" aria-label="暂估 0401013"></td><td></td></tr>
      <tr><th class="n">4</th><td class="n">0415021</td><td class="c">材</td><td>蒸压加气混凝土砌块</td><td><span class="n">600</span>×<span class="n">180</span>×<span class="n">200</span></td><td class="c">千块</td><td></td><td class="r n">0.444</td><td class="r n">0.0444</td><td class="r n">3800.21</td><td class="r n">3800.21</td><td class="r n">4428</td><td class="r n">16.52</td><td class="r n">168.73</td><td class="c"><input type="checkbox" aria-label="暂估 0415021"></td><td></td></tr>
      <tr><th class="n">5</th><td class="n">9946131</td><td class="c">材</td><td>其他材料费</td><td></td><td class="c">元</td><td></td><td class="r n">5.08</td><td class="r n">0.508</td><td class="r n">1</td><td class="r n">1</td><td class="r n">1</td><td class="r n">0</td><td class="r n">0.51</td><td class="c"><input type="checkbox" aria-label="暂估 9946131"></td><td></td></tr>
      <tr><th class="n">6</th><td class="n">3115001</td><td class="c">材</td><td>水</td><td></td><td></td><td></td><td></td><td></td><td></td><td></td><td></td><td></td><td></td><td></td><td></td></tr>
    </table>
  </div>
  <div class="popup"><svg width="16" height="8" viewBox="0 0 16 8"><path d="M0 8V3q0-3 4-3h8q4 0 4 3v5z" fill="#ffb400"/><path d="M4 3.500h8M7 2L5 6M11 2l2 4" stroke="#fff"/></svg></div>
</section>

<svg class="notes" width="1448" height="862" viewBox="0 0 1448 862" aria-hidden="true">
  <defs><linearGradient id="fade" gradientUnits="userSpaceOnUse" x1="1145" y1="557" x2="1110" y2="592"><stop offset="0" stop-color="#fd3a38" stop-opacity=".2"/><stop offset="1" stop-color="#fd3a38"/></linearGradient></defs>
  <g fill="none" stroke="#f25555"><ellipse cx="1017.500" cy="165" rx="17.500" ry="19"/><circle cx="1163.500" cy="532" r="24.500"/><ellipse cx="939" cy="765" rx="33" ry="15"/></g>
  <path d="M1031 178L1053.500 241 1102 390 1137.500 501.500 1141.500 500.500 1140 511 1133 504 1135 502.500 1099 390 1052.500 241z" fill="#fd3a38"/>
  <path d="M1145 557L1086 616.500 1021 682 972.500 728 975.500 731 962 734 968 722 970.500 725 1018 678 1085 615.500z" fill="url(#fade)"/>
</svg>
</body>
</html>
```
FILE: styles.css
```css
* { box-sizing: border-box; }
body {
  margin: 0;
  height: 100vh;
  overflow: hidden;
  position: relative;
  background: #fff;
  color: #000;
  font: 12px/16px "Noto Sans CJK SC", "Noto Sans", sans-serif;
}
button {
  display: flex;
  align-items: center;
  gap: 3px;
  margin: 0;
  padding: 0;
  border: 0;
  background: none;
  color: inherit;
  font: inherit;
  white-space: nowrap;
}
svg { display: block; flex: none; }
.defs { position: absolute; width: 0; height: 0; }
.caret {
  flex: none;
  width: 0;
  border: 3px solid transparent;
  border-top: 3px solid #777;
  border-bottom: 0;
}
.caret.dark { border-top-color: #111; }
.sep { flex: none; width: 1px; height: 22px; background: #8c8c8c; }
.off { color: #8a8a8a; }
.n { font-family: "DejaVu Sans Mono", monospace; font-size: 10px; font-weight: 400; }

/* Main application */
.app { display: flex; flex-direction: column; height: 100%; }
.top { display: flex; height: 29px; flex: none; }
.menu {
  display: flex;
  align-items: center;
  gap: 10px;
  width: 585px;
  flex: none;
  border-right: 1px solid #ccc;
  border-bottom: 1px solid #ccc;
  color: #666;
}
.menu button:first-child { margin-left: -3px; }
.menu button:nth-last-child(2) { gap: 4px; }
.menu button:last-child { margin-left: -2px; }
.news { margin-left: auto; padding-top: 6px; color: #5c2e00; text-decoration: none; }
.account {
  display: flex;
  align-items: center;
  gap: 7px;
  width: 178px;
  margin-left: 32px;
  padding-left: 8px;
  overflow: hidden;
  border-left: 2px dotted #bbb;
  border-bottom: 1px solid #ccc;
}
.account span + svg { margin-left: 3px; }
.floorbar { flex: none; height: 30px; border-bottom: 1px solid #d4d4d4; }
.floorbar-in {
  display: flex;
  align-items: center;
  gap: 7px;
  width: 520px;
  height: 29px;
  padding-left: 6px;
  border-right: 1px solid #ccc;
}
.combo { display: flex; align-items: center; width: 61px; height: 21px; border: 1px solid #ececec; }
.combo select {
  flex: 1;
  width: 46px;
  height: 19px;
  padding: 0 0 0 1px;
  border: 0;
  appearance: none;
  background: #fff;
  color: #000;
  font: inherit;
}
.combo + .sep { margin-left: -3px; }
.sum { gap: 7px; padding-left: 1px; }
.sum b { font: bold 14px/16px "Liberation Sans", sans-serif; }
.work { display: flex; flex: 1; min-height: 0; }

.strip { display: flex; flex-direction: column; width: 10px; flex: none; padding-top: 2px; border-right: 1px solid #c0c0c0; }
.strip-title { height: 14px; padding-top: 2px; border: 1px solid #777; border-left: 0; background: #f0f0f0; }
.strip-box { height: 24px; margin-top: 11px; border: solid #888; border-width: 1px 1px 1px 0; background: #f0f0f0; }
.strip-box.on { margin-top: 0; border-width: 0 1px 2px 0; }
.strip-rest { flex: 1; margin-top: 26px; border-top: 1px solid #888; border-right: 1px solid #888; }

.side { display: flex; flex-direction: column; width: 360px; flex: none; padding: 2px 7px 0 4px; background: #f0f0f0; }
.pane { display: flex; flex-direction: column; background: #fff; }
.list { height: 316px; flex: none; border-bottom: 1px solid #999; }
.props { flex: 1; min-height: 0; margin-top: 7px; }
.pane-title {
  display: flex;
  align-items: center;
  justify-content: space-between;
  height: 14px;
  flex: none;
  margin: 0;
  padding-right: 4px;
  border: solid #777;
  border-width: 1px 1px 1px 0;
  background: #f0f0f0;
  font-size: 13px;
  font-weight: 400;
  line-height: 12px;
}
.pane-title span { display: flex; gap: 8px; }
.pane-tools { display: flex; align-items: center; gap: 8px; height: 28px; flex: none; padding-left: 6px; border-right: 1px solid #ccc; border-bottom: 1px solid #ddd; }
.search { display: flex; height: 26px; flex: none; margin: 0; padding: 1px 1px 1px 2px; background: #f0f0f0; }
.search input {
  flex: 1;
  min-width: 0;
  padding: 0 1px 4px;
  border: 1px solid #666;
  outline: 0;
  background: #fff;
  font: inherit;
}
.search input::placeholder { color: #777; opacity: 1; }
.search button { width: 23px; padding-left: 5px; }
.pane-body { flex: 1; min-height: 0; padding: 2px 1px 0 2px; border-left: 2px solid #b4b4b8; border-top: 1px solid #a8a8a8; border-right: 1px solid #b4b4b8; }

/* Grids */
.grid { width: 100%; table-layout: fixed; border-collapse: separate; border-spacing: 0; line-height: 18px; }
.grid th, .grid td {
  height: 19px;
  padding: 0 2px;
  overflow: hidden;
  border-right: 1px solid #bcbcbc;
  border-bottom: 1px solid #bcbcbc;
  font-weight: 400;
  text-align: left;
  white-space: nowrap;
  vertical-align: middle;
}
.grid th { text-align: center; }
.grid .n { line-height: 18px; }
.grid span.n { line-height: 10px; }
.grid .head th { padding: 0; background: linear-gradient(#fff, #efefef); }
.grid .head .gold { background: linear-gradient(#f8d59a, #f1bf5c); color: #5a0050; }
.grid .c { text-align: center; }
.grid .r { text-align: right; }
.grid .l { text-align: left; }
.grid .sel { background: #d8e9f8; }
.grid .cur { background: #fecf88; color: #5a0050; }
.grid .strong { font-weight: 700; font-size: 13px; }
.grid .n.strong { font-size: 10px; }
.grid .head .cut { padding-left: 5px; text-align: left; }
.grid .tree { padding: 0; }
.tree svg { display: inline-block; vertical-align: top; }
.grid input {
  display: block;
  width: 12px;
  height: 12px;
  margin: 0 auto;
  border: 1px solid #a8a8a8;
  appearance: none;
  background: #fff;
}
.grid input:disabled { border-color: #ddd; }

.parts th { background: linear-gradient(#fff, #efefef); }
.parts .head th { height: 21px; }
.parts td { padding-left: 19px; }

.grid.prop { width: 179px; }
.prop .head th { height: 22px; padding: 0 1px; text-align: left; }
.prop td { height: 21px; }
.prop .key { padding: 0 0 0 19px; color: #0000e6; }
.prop .key.blk { color: #000; }
.grid.prop input { width: 13px; height: 13px; margin: 0; border-color: #222; }
.grid.prop input:checked::before {
  content: "";
  display: block;
  width: 5px;
  height: 8px;
  margin: 0 0 0 3px;
  border: solid #444;
  border-width: 0 1px 1px 0;
  transform: rotate(45deg);
}
.prop .grp td { height: 19px; }
.grp svg { display: inline-block; margin-right: 4px; vertical-align: -2px; }

.main { display: flex; flex-direction: column; flex: 1; min-width: 0; overflow: hidden; }
.tools { display: flex; align-items: center; gap: 7px; height: 28px; flex: none; padding-left: 6px; }
.main-body { flex: 1; border-left: 2px solid #b4b4b8; border-top: 2px solid #b0b0b0; }
.quota .head th { height: 20px; }
.quota th { background: linear-gradient(#fff, #efefef); }
.quota .tall td { height: 29px; }
.quota .tall .tree { line-height: 28px; }
.quota .cyan td { background: #c8feff; }
.quota .wrap { line-height: 13px; white-space: normal; }

/* Budget window */
.win {
  position: absolute;
  top: 244px;
  right: 0;
  bottom: 0;
  left: 350px;
  display: flex;
  flex-direction: column;
  overflow: hidden;
  padding-left: 1px;
  border-top: 1px solid #e4e4e4;
  border-left: 1px solid #e8e8e8;
  background: #fff;
}
.titlebar { display: grid; grid-template-columns: 353px 1fr auto; align-items: center; height: 34px; flex: none; }
.titlebar h1 { margin: 0; font-size: 12px; font-weight: 400; white-space: nowrap; }
.quick { display: flex; align-items: center; gap: 8px; padding: 0 0 4px 16px; }
.quick button { gap: 5px; }
.winctl { display: flex; align-items: center; gap: 26px; padding: 0 26px 6px 0; }

.ribbon-tabs { display: flex; height: 25px; flex: none; border-bottom: 2px solid #08a9f0; }
.logo {
  width: 231px;
  height: 25px;
  flex: none;
  margin-right: 4px;
  padding-left: 16px;
  background: #00a9f2;
  color: #fff;
}
.logo em { font: italic bold 27px/24px "DejaVu Sans", sans-serif; }
.logo b { font-size: 18px; line-height: 24px; font-weight: 700; }
.logo .caret { margin-left: 10px; border-width: 4px 4px 0; border-top-color: #fff; }
.rtab { width: 76px; height: 25px; flex: none; justify-content: center; font-size: 14px; border-bottom: 2px solid transparent; }
.rtab.on { color: #08a0e8; border-bottom: 4px solid #08a9f0; }
.ribbon-right { display: flex; align-items: center; gap: 10px; margin-left: auto; margin-right: -2px; }
.ribbon-right .learn, .ribbon-right .wnd { gap: 4px; font-size: 14px; }
.learn .caret, .help .caret { margin-left: 5px; }
.wnd .caret { margin-left: 3px; }
.ribbon-right button:nth-child(4) { gap: 5px; }
.ribbon-right button:nth-child(6) { gap: 3px; }
.help b { color: #08a9f0; font: bold 16px/20px "Liberation Sans", sans-serif; }

.ribbon { display: flex; height: 90px; flex: none; padding: 5px 0; border-bottom: 1px solid #ddd; color: #333; }
.g { display: flex; flex: none; gap: 0; padding-top: 5px; border-right: 1px solid #d9d9d9; }
.g.ctr { justify-content: center; gap: 10px; }
.g.w55 { padding-left: 13px; }
.g.pl4 { padding-left: 4px; }
.g.pl8 { padding-left: 8px; }
.big { flex-direction: column; align-items: center; align-self: flex-start; gap: 4px; }
.big .caret { margin-top: 2px; }
.stack { display: flex; flex-direction: column; padding-left: 4px; }
.stack button { height: 32px; }
.stack .caret { margin-left: 8px; }
.stack.dense { margin-top: -4px; padding: 0; }
.stack.dense button { height: 25px; }
.crane { margin-left: 7px; }
.crane span { line-height: 17px; }
.menu3 { justify-content: center; padding-top: 47px; color: #000; }

.subtabs { display: flex; height: 37px; flex: none; padding-top: 4px; border-bottom: 2px solid #3fb4e2; }
.subtabs button { position: relative; width: 80px; justify-content: center; border-right: 1px solid #ddd; }
.subtabs .wide { width: 92px; }
.subtabs .on { color: #08a0e8; font-size: 13px; font-weight: 700; }
.subtabs .pale { color: #5cc3ee; }
.subtabs .on::after, .subtabs .pale::after {
  content: "";
  position: absolute;
  bottom: 0;
  left: 36px;
  border: 4px solid transparent;
  border-top: 0;
  border-bottom-color: #3fb4e2;
}
.subtabs .pale::after { border-bottom-color: #b5e2f5; }

.upper { flex: 1; min-height: 0; overflow: hidden; border-top: 1px solid #ccc; }
.bill .head th, .detail .head th { height: 25px; border-color: #d4d4d4; background: #fff; }
.grid .head .pick { border-bottom: 2px solid #35a5d8; background: #ffecb4; font-size: 13px; font-weight: 700; }
.bill td, .detail td { border-color: #b4b4b4; }
.bill th, .detail th { border-color: #d4d4d4; }
.grid .mark { background: #ffecb4; }
.bill .gray td { background: #dae3dd; }
.bill .blue td { background: #ace8fb; }
.violet td { color: #800080; }
.turn { display: inline-block; height: 24px; line-height: 14px; writing-mode: vertical-rl; text-orientation: sideways; vertical-align: middle; }
.grid .focus { position: relative; box-shadow: inset 2px 0 #35a5d8, inset -2px -2px #808080, inset 0 1px #808080; }
.focus button { position: absolute; top: 7px; right: 7px; }
.focus .drop { top: 6px; right: 6px; }
.note { position: relative; }
.note::after {
  content: "";
  position: absolute;
  top: 0;
  right: 0;
  border: 3px solid #f00;
  border-left-color: transparent;
  border-bottom-color: transparent;
}

.lower { display: flex; flex-direction: column; height: 187px; flex: none; overflow: hidden; }
.scroll { display: flex; height: 14px; flex: none; background: #e1e1e1; }
.scroll button { width: 14px; justify-content: center; border: 1px solid #ccc; background: #fff; }
.thumb { flex: 0 1 924px; background: #c9c9c9; }
.handle { display: flex; justify-content: center; width: 84px; height: 6px; flex: none; margin-left: 500px; background: #80c269; }
.dtabs { display: flex; height: 34px; flex: none; padding-top: 3px; border-bottom: 1px solid #80c269; }
.dtabs button { justify-content: center; padding-top: 2px; border-top: 1px solid #b8dfa8; border-right: 1px solid #b8dfa8; }
.dtabs .on { background: #80c269; color: #fff; font-size: 13px; font-weight: 700; }
.detail { margin-top: 1px; border-top: 1px solid #ccc; }
.popup {
  position: absolute;
  right: 0;
  bottom: 0;
  left: 315px;
  height: 12px;
  padding: 4px 12px 0;
  border-top: 1px solid #999;
  background: #00a9f2;
}
.notes { position: absolute; top: 0; left: 0; pointer-events: none; }

.w16 { width: 16px; } .w21 { width: 21px; } .w22 { width: 22px; } .w26 { width: 26px; }
.w31 { width: 31px; } .w38 { width: 38px; } .w39 { width: 39px; } .w41 { width: 41px; }
.w42 { width: 42px; } .w43 { width: 43px; } .w46 { width: 46px; } .w47 { width: 47px; }
.w49 { width: 49px; } .w54 { width: 54px; } .w55 { width: 56px; } .w58 { width: 58px; }
.w64 { width: 64px; } .w65 { width: 65px; } .w67 { width: 67px; } .w72 { width: 72px; }
.w73 { width: 73px; } .w79 { width: 79px; } .w80 { width: 80px; } .w81 { width: 81px; }
.w84 { width: 84px; } .w85 { width: 85px; } .w86 { width: 86px; } .w87 { width: 87px; }
.w92 { width: 92px; } .w97 { width: 97px; } .w101 { width: 101px; } .w116 { width: 116px; }
.w121 { width: 121px; } .w125 { width: 125px; } .w126 { width: 126px; } .w127 { width: 127px; }
.w151 { width: 151px; } .w152 { width: 152px; } .w169 { width: 169px; } .w199 { width: 199px; }
.w201 { width: 201px; } .w206 { width: 206px; } .w221 { width: 221px; }
```
